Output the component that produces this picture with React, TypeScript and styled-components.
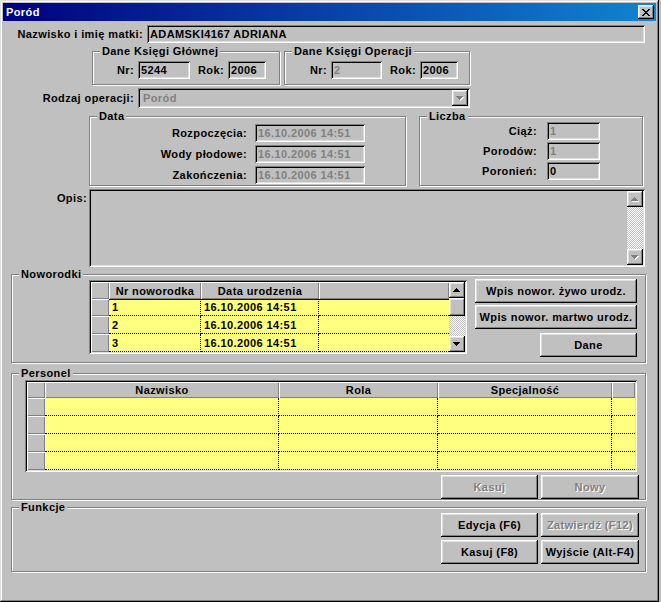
import React from 'react';
import styled, {createGlobalStyle, css} from 'styled-components';

const GlobalStyle = createGlobalStyle`
  *, *::before, *::after {
    box-sizing: border-box;
  }
  body {
    margin: 0;
    background: #c0c0c0;
    font-family: 'Liberation Sans', Arial, sans-serif;
    font-size: 11px;
    font-weight: bold;
    letter-spacing: 0.4px;
    color: #000;
  }
`

const raised = css`
  box-shadow: inset -1px -1px #000, inset 1px 1px #fff, inset -2px -2px #808080, inset 2px 2px #dfdfdf;
`

const sunken = css`
  box-shadow: inset 1px 1px #808080, inset -1px -1px #fff, inset 2px 2px #000, inset -2px -2px #dfdfdf;
`

const Window = styled.div`
  width: 659px;
  height: 602px;
  padding: 3px;
  background: #c0c0c0;
  box-shadow: inset -1px -1px #000, inset 1px 1px #dfdfdf, inset -2px -2px #808080, inset 2px 2px #fff;
  display: flex;
  flex-direction: column;
`

const TitleBar = styled.div`
  height: 18px;
  flex: none;
  padding: 0 2px 0 3px;
  display: flex;
  align-items: center;
  justify-content: space-between;
  background: linear-gradient(90deg, #000080, #1084d0);
  color: #fff;
`

const CloseButton = styled.div`
  width: 16px;
  height: 14px;
  background: #c0c0c0;
  ${raised}
  display: flex;
  align-items: center;
  justify-content: center;
`

const Row = styled.div<{$mt: number; $ml?: number; $gap?: number; $top?: boolean}>`
  display: flex;
  align-items: ${p => (p.$top ? 'flex-start' : 'center')};
  gap: ${p => p.$gap ?? 0}px;
  margin-top: ${p => p.$mt}px;
  padding-left: ${p => p.$ml ?? 0}px;
`

const Label = styled.div<{$w: number; $pr?: number; $pt?: number}>`
  flex: none;
  width: ${p => p.$w}px;
  padding-right: ${p => p.$pr ?? 4}px;
  padding-top: ${p => p.$pt ?? 0}px;
  text-align: right;
  white-space: nowrap;
`

const Field = styled.div<{$w: number; $dim?: boolean}>`
  flex: none;
  width: ${p => p.$w}px;
  height: 18px;
  padding: 0 3px;
  line-height: 18px;
  white-space: nowrap;
  overflow: hidden;
  color: ${p => (p.$dim ? '#808080' : '#000')};
  ${sunken}
`

const Combo = styled.div`
  flex: none;
  width: 332px;
  height: 20px;
  padding: 2px 2px 2px 5px;
  display: flex;
  align-items: center;
  justify-content: space-between;
  color: #808080;
  ${sunken}
`

const SmallButton = styled.div<{$h?: number}>`
  flex: none;
  width: 16px;
  height: ${p => p.$h ?? 16}px;
  background: #c0c0c0;
  ${raised}
  display: flex;
  align-items: center;
  justify-content: center;
`

const Group = styled.div<{$w: number; $h: number}>`
  flex: none;
  width: ${p => p.$w}px;
  height: ${p => p.$h}px;
  border: 1px solid #808080;
  box-shadow: 1px 1px 0 #fff, inset 1px 1px 0 #fff;
  display: flex;
  flex-direction: column;
`

const Legend = styled.div`
  align-self: flex-start;
  height: 13px;
  line-height: 13px;
  margin: -7px 0 -6px 7px;
  padding: 0 2px;
  background: #c0c0c0;
`

const GroupBody = styled.div<{$pad: string; $column?: boolean; $gap?: number}>`
  display: flex;
  flex-direction: ${p => (p.$column ? 'column' : 'row')};
  align-items: ${p => (p.$column ? 'stretch' : 'flex-start')};
  gap: ${p => p.$gap ?? 0}px;
  padding: ${p => p.$pad};
`

const FieldLine = styled.div`
  display: flex;
  align-items: center;
`

const Memo = styled.div`
  flex: none;
  width: 556px;
  height: 78px;
  padding: 2px;
  display: flex;
  justify-content: flex-end;
  ${sunken}
`

const ScrollBar = styled.div`
  flex: none;
  width: 16px;
  display: flex;
  flex-direction: column;
`

const ScrollTrack = styled.div`
  flex: 1;
  background-color: #fff;
  background-image: repeating-conic-gradient(#c0c0c0 0% 25%, #fff 0% 50%);
  background-size: 2px 2px;
`

const GridFrame = styled.div<{$w: number; $h: number}>`
  flex: none;
  width: ${p => p.$w}px;
  height: ${p => p.$h}px;
  padding: 2px;
  display: flex;
  background: #c0c0c0;
  ${sunken}
`

const Table = styled.div<{$cols: string; $rows: string}>`
  flex: 1;
  min-width: 0;
  display: grid;
  grid-template-columns: ${p => p.$cols};
  grid-template-rows: ${p => p.$rows};
`

const HeadCell = styled.div`
  background: #c0c0c0;
  box-shadow: inset 1px 1px #fff, inset -1px -1px #808080;
  display: flex;
  align-items: center;
  justify-content: center;
  white-space: nowrap;
  overflow: hidden;
`

const RowHead = styled.div`
  background: #c0c0c0;
  box-shadow: inset 1px 1px #fff, inset -1px -1px #808080;
`

const Cell = styled.div<{$end?: boolean; $current?: boolean}>`
  background: #ffff80;
  padding-left: 3px;
  display: flex;
  align-items: center;
  white-space: nowrap;
  overflow: hidden;
  border-right: ${p => (p.$end ? 'none' : '1px dotted #000')};
  border-bottom: 1px dotted ${p => (p.$current ? '#000080' : '#000')};
  ${p => p.$current && css`box-shadow: inset 0 1px #000080;`}
`

const Btn = styled.button<{$w: number}>`
  flex: none;
  width: ${p => p.$w}px;
  height: 24px;
  margin: 0;
  padding: 0;
  border: none;
  background: #c0c0c0;
  ${raised}
  font: inherit;
  letter-spacing: inherit;
  color: #000;
  white-space: nowrap;

  &:disabled {
    color: #808080;
    text-shadow: 1px 1px #fff;
  }
`

const ButtonStack = styled.div`
  display: flex;
  flex-direction: column;
  align-items: flex-end;
  gap: 2px;
  margin: -1px 0 0 8px;
`

const DaneButton = styled(Btn)`
  margin-top: 2px;
`

const ButtonRow = styled.div<{$mt?: number}>`
  display: flex;
  justify-content: flex-end;
  gap: 3px;
  padding-right: 6px;
  margin-top: ${p => p.$mt ?? 0}px;
`

const CloseGlyph = () => (
  <svg width='8' height='7' viewBox='0 0 8 7' shapeRendering='crispEdges'>
    <path
      d='M0 0h2v1H0z M6 0h2v1H6z M1 1h2v1H1z M5 1h2v1H5z M2 2h4v1H2z M3 3h2v1H3z M2 4h4v1H2z M1 5h2v1H1z M5 5h2v1H5z M0 6h2v1H0z M6 6h2v1H6z'
      fill='#000'
    />
  </svg>
)

const DOWN = 'M0 0h7v1H0z M1 1h5v1H1z M2 2h3v1H2z M3 3h1v1H3z'
const UP = 'M3 0h1v1H3z M2 1h3v1H2z M1 2h5v1H1z M0 3h7v1H0z'

const Arrow = ({up, dim}: {up?: boolean; dim?: boolean}) => (
  <svg width='8' height='5' viewBox='0 0 8 5' shapeRendering='crispEdges'>
    {dim && <path d={up ? UP : DOWN} fill='#fff' transform='translate(1,1)' />}
    <path d={up ? UP : DOWN} fill={dim ? '#808080' : '#000'} />
  </svg>
)

const babies = [
  {nr: '1', date: '16.10.2006 14:51'},
  {nr: '2', date: '16.10.2006 14:51'},
  {nr: '3', date: '16.10.2006 14:51'},
]

const dates = [
  {label: 'Rozpoczęcia:', value: '16.10.2006 14:51'},
  {label: 'Wody płodowe:', value: '16.10.2006 14:51'},
  {label: 'Zakończenia:', value: '16.10.2006 14:51'},
]

const counts = [
  {label: 'Ciąż:', value: '1', dim: true},
  {label: 'Porodów:', value: '1', dim: true},
  {label: 'Poronień:', value: '0', dim: false},
]

export default function App() {
  return (
    <>
      <GlobalStyle />
      <Window>
        <TitleBar>
          <span>Poród</span>
          <CloseButton><CloseGlyph /></CloseButton>
        </TitleBar>

        <Row $mt={4}>
          <Label $w={144}>Nazwisko i imię matki:</Label>
          <Field $w={498}>ADAMSKI4167 ADRIANA</Field>
        </Row>

        <Row $mt={8} $ml={89} $gap={4}>
          <Group $w={188} $h={34}>
            <Legend>Dane Księgi Głównej</Legend>
            <GroupBody $pad='9px 0 0 0'>
              <FieldLine>
                <Label $w={45}>Nr:</Label>
                <Field $w={52}>5244</Field>
                <Label $w={38}>Rok:</Label>
                <Field $w={38}>2006</Field>
              </FieldLine>
            </GroupBody>
          </Group>
          <Group $w={186} $h={34}>
            <Legend>Dane Księgi Operacji</Legend>
            <GroupBody $pad='9px 0 0 0'>
              <FieldLine>
                <Label $w={46}>Nr:</Label>
                <Field $w={51} $dim>2</Field>
                <Label $w={38}>Rok:</Label>
                <Field $w={38}>2006</Field>
              </FieldLine>
            </GroupBody>
          </Group>
        </Row>

        <Row $mt={3}>
          <Label $w={135}>Rodzaj operacji:</Label>
          <Combo>
            <span>Poród</span>
            <SmallButton><Arrow dim /></SmallButton>
          </Combo>
        </Row>

        <Row $mt={8} $ml={86} $gap={13}>
          <Group $w={317} $h={70}>
            <Legend>Data</Legend>
            <GroupBody $pad='7px 0 0 0' $column $gap={3}>
              {dates.map(d => (
                <FieldLine key={d.label}>
                  <Label $w={165} $pr={8}>{d.label}</Label>
                  <Field $w={110} $dim>{d.value}</Field>
                </FieldLine>
              ))}
            </GroupBody>
          </Group>
          <Group $w={224} $h={70}>
            <Legend>Liczba</Legend>
            <GroupBody $pad='5px 0 0 0' $column $gap={2}>
              {counts.map(c => (
                <FieldLine key={c.label}>
                  <Label $w={127} $pr={10}>{c.label}</Label>
                  <Field $w={53} $dim={c.dim}>{c.value}</Field>
                </FieldLine>
              ))}
            </GroupBody>
          </Group>
        </Row>

        <Row $mt={3} $top>
          <Label $w={86} $pr={2} $pt={3}>Opis:</Label>
          <Memo>
            <ScrollBar>
              <SmallButton><Arrow up dim /></SmallButton>
              <ScrollTrack />
              <SmallButton><Arrow dim /></SmallButton>
            </ScrollBar>
          </Memo>
        </Row>

        <Row $mt={7} $ml={8}>
          <Group $w={635} $h={89}>
            <Legend>Noworodki</Legend>
            <GroupBody $pad='5px 0 0 77px'>
              <GridFrame $w={378} $h={74}>
                <Table $cols='18px 92px 118px 1fr' $rows='17px 17px 18px 18px'>
                  <HeadCell />
                  <HeadCell>Nr noworodka</HeadCell>
                  <HeadCell>Data urodzenia</HeadCell>
                  <HeadCell />
                  {babies.map((b, i) => (
                    <React.Fragment key={b.nr}>
                      <RowHead />
                      <Cell $current={i === 0}>{b.nr}</Cell>
                      <Cell $current={i === 0}>{b.date}</Cell>
                      <Cell $current={i === 0} $end />
                    </React.Fragment>
                  ))}
                </Table>
                <ScrollBar>
                  <SmallButton><Arrow up /></SmallButton>
                  <SmallButton $h={18} />
                  <ScrollTrack />
                  <SmallButton><Arrow /></SmallButton>
                </ScrollBar>
              </GridFrame>
              <ButtonStack>
                <Btn $w={162}>Wpis nowor. żywo urodz.</Btn>
                <Btn $w={162}>Wpis nowor. martwo urodz.</Btn>
                <DaneButton $w={97}>Dane</DaneButton>
              </ButtonStack>
            </GroupBody>
          </Group>
        </Row>

        <Row $mt={10} $ml={8}>
          <Group $w={635} $h={127}>
            <Legend>Personel</Legend>
            <GroupBody $pad='6px 0 0 13px' $column>
              <GridFrame $w={612} $h={92}>
                <Table $cols='18px 234px 159px 174px 1fr' $rows='16px 18px 18px 18px 18px'>
                  <HeadCell />
                  <HeadCell>Nazwisko</HeadCell>
                  <HeadCell>Rola</HeadCell>
                  <HeadCell>Specjalność</HeadCell>
                  <HeadCell />
                  {[0, 1, 2, 3].map(i => (
                    <React.Fragment key={i}>
                      <RowHead />
                      <Cell />
                      <Cell />
                      <Cell />
                      <Cell $end />
                    </React.Fragment>
                  ))}
                </Table>
              </GridFrame>
              <ButtonRow $mt={3}>
                <Btn $w={97} disabled>Kasuj</Btn>
                <Btn $w={98} disabled>Nowy</Btn>
              </ButtonRow>
            </GroupBody>
          </Group>
        </Row>

        <Row $mt={7} $ml={8}>
          <Group $w={635} $h={65}>
            <Legend>Funkcje</Legend>
            <GroupBody $pad='5px 0 0 0' $column $gap={3}>
              <ButtonRow>
                <Btn $w={97}>Edycja (F6)</Btn>
                <Btn $w={98} disabled>Zatwierdź (F12)</Btn>
              </ButtonRow>
              <ButtonRow>
                <Btn $w={97}>Kasuj (F8)</Btn>
                <Btn $w={98}>Wyjście (Alt-F4)</Btn>
              </ButtonRow>
            </GroupBody>
          </Group>
        </Row>
      </Window>
    </>
  );
}
